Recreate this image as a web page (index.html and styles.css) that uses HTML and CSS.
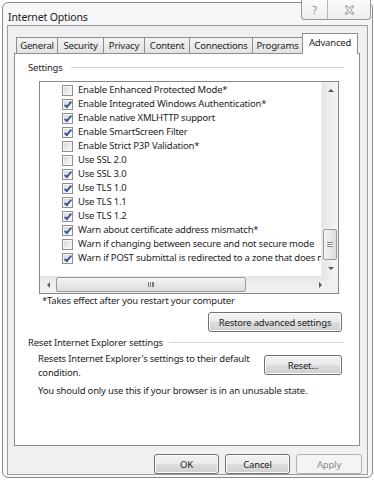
FILE: index.html
```html
<!DOCTYPE html>
<html lang="en">
<head>
  <meta charset="UTF-8" />
  <title>Internet Options</title>
  <link rel="stylesheet" href="styles.css">
</head>
<body>
  <div class="window">
    <div class="titlebar">
      <span class="title">Internet Options</span>
      <div class="caption-buttons">
        <span class="cap-btn cap-help">?</span>
        <span class="cap-btn cap-close">
          <svg width="11" height="10" viewBox="0 0 11 10">
            <path d="M1 1 H3.5 L5.5 3.5 L7.5 1 H10 L6.8 5 L10 9 H7.5 L5.5 6.5 L3.5 9 H1 L4.2 5 Z" fill="none" stroke="#8c8c8c" stroke-width="0.9"/>
          </svg>
        </span>
      </div>
    </div>

    <div class="dialog">
      <div class="tabs">
        <span class="tab tab-general">General</span>
        <span class="tab tab-security">Security</span>
        <span class="tab tab-privacy">Privacy</span>
        <span class="tab tab-content">Content</span>
        <span class="tab tab-connections">Connections</span>
        <span class="tab tab-programs">Programs</span>
        <span class="tab tab-advanced active">Advanced</span>
      </div>

      <div class="panel">
        <div class="group-head">
          <span>Settings</span>
          <span class="rule"></span>
        </div>

        <div class="listbox">
          <div class="list-main">
            <ul class="list-items">
              <li><span class="check"></span>Enable Enhanced Protected Mode*</li>
              <li><span class="check on"></span>Enable Integrated Windows Authentication*</li>
              <li><span class="check on"></span>Enable native XMLHTTP support</li>
              <li><span class="check on"></span>Enable SmartScreen Filter</li>
              <li><span class="check"></span>Enable Strict P3P Validation*</li>
              <li><span class="check"></span>Use SSL 2.0</li>
              <li><span class="check on"></span>Use SSL 3.0</li>
              <li><span class="check on"></span>Use TLS 1.0</li>
              <li><span class="check on"></span>Use TLS 1.1</li>
              <li><span class="check on"></span>Use TLS 1.2</li>
              <li><span class="check on"></span>Warn about certificate address mismatch*</li>
              <li><span class="check"></span>Warn if changing between secure and not secure mode</li>
              <li><span class="check on"></span>Warn if POST submittal is redirected to a zone that does not permit posts</li>
            </ul>
            <div class="vscroll">
              <span class="arrow arrow-up"></span>
              <span class="vtrack">
                <span class="vthumb"><span class="grip-h"></span></span>
              </span>
              <span class="arrow arrow-down"></span>
            </div>
          </div>
          <div class="hscroll-row">
            <div class="hscroll">
              <span class="arrow arrow-left"></span>
              <span class="htrack">
                <span class="hthumb"><span class="grip-v"></span></span>
              </span>
              <span class="arrow arrow-right"></span>
            </div>
            <div class="corner"></div>
          </div>
        </div>

        <p class="note">*Takes effect after you restart your computer</p>

        <div class="btn-row">
          <button class="btn btn-restore">Restore advanced settings</button>
        </div>

        <div class="group-head reset-head">
          <span>Reset Internet Explorer settings</span>
          <span class="rule"></span>
        </div>

        <div class="reset-row">
          <p class="reset-text">Resets Internet Explorer's settings to their default condition.</p>
          <button class="btn btn-reset">Reset...</button>
        </div>

        <p class="warn">You should only use this if your browser is in an unusable state.</p>
      </div>

      <div class="footer">
        <button class="btn btn-footer">OK</button>
        <button class="btn btn-footer">Cancel</button>
        <button class="btn btn-footer btn-apply" disabled>Apply</button>
      </div>
    </div>
  </div>
</body>
</html>
```

FILE: styles.css
```css
body {
  margin: 0;
  background-color: #ffffff;
  font-family: "Noto Sans", "Open Sans", sans-serif;
  font-size: 9.5px;
  letter-spacing: -0.2px;
  color: #1e1e1e;
}

.window {
  margin: 2px 0 0 2px;
  width: 371px;
  height: 476px;
  box-sizing: border-box;
  border: 1px solid #8a8a8a;
  border-radius: 6px;
  background-color: #f5f6f7;
  display: flex;
  flex-direction: column;
}

/* title bar */
.titlebar {
  height: 24px;
  display: flex;
  align-items: flex-start;
  padding-left: 5px;
  padding-right: 1px;
}

.title {
  font-size: 10.5px;
  letter-spacing: -0.15px;
  line-height: 16px;
  margin-top: 6px;
  color: #1a1a1a;
}

.caption-buttons {
  margin-left: auto;
  margin-top: -3px;
  display: flex;
  height: 20px;
  border: 1px solid #9a9a9a;
  border-top: none;
  border-radius: 0 0 4px 4px;
  background: linear-gradient(#fbfbfb, #eeeeee);
  box-sizing: border-box;
}

.cap-btn {
  display: flex;
  align-items: center;
  justify-content: center;
  color: #8c8c8c;
}

.cap-help {
  width: 25px;
  border-right: 1px solid #b4b4b4;
  font-size: 11px;
}

.cap-close {
  width: 42px;
}

/* dialog body */
.dialog {
  margin: 0 4px 4px;
  flex: 1;
  border: 1px solid #9c9c9c;
  background-color: #f0f0f0;
  padding: 7px 7px 0 6px;
  display: flex;
  flex-direction: column;
}

.tabs {
  display: flex;
  align-items: flex-end;
  height: 20px;
  padding-left: 2px;
}

.tab {
  height: 16px;
  box-sizing: border-box;
  border: 1px solid #8c8e94;
  border-bottom: none;
  margin-left: -1px;
  background: linear-gradient(#f3f3f3, #e3e3e3);
  display: flex;
  align-items: center;
  justify-content: center;
  line-height: 14px;
}

.tab:first-child {
  margin-left: 0;
}

.tab-general { width: 42px; }
.tab-security { width: 47px; }
.tab-privacy { width: 42px; }
.tab-content { width: 46px; }
.tab-connections { width: 64px; }
.tab-programs { width: 51px; }

.tab.active {
  width: 56px;
  height: 21px;
  margin-bottom: -1px;
  background: #ffffff;
  position: relative;
  z-index: 1;
  padding-bottom: 3px;
}

.panel {
  height: 384px;
  border: 1px solid #8c8e94;
  background-color: #ffffff;
  padding: 7px 15px 0 13px;
}

.group-head {
  display: flex;
  align-items: center;
  gap: 8px;
  line-height: 14px;
}

.rule {
  flex: 1;
  height: 0;
  border-top: 1px solid #d0d5d9;
  border-bottom: 1px solid #ffffff;
}

/* settings list */
.listbox {
  margin: 6px 5px 0 11px;
  height: 213px;
  box-sizing: border-box;
  border: 1px solid #828790;
  display: flex;
  flex-direction: column;
  overflow: hidden;
}

.list-main {
  display: flex;
  height: 194px;
}

.list-items {
  list-style: none;
  margin: 0;
  padding: 1px 0 0 22px;
  flex: 1;
  overflow: hidden;
  white-space: nowrap;
}

.list-items li {
  height: 14px;
  line-height: 14px;
  display: flex;
  align-items: center;
}

.check {
  width: 11px;
  height: 11px;
  box-sizing: border-box;
  border: 1px solid #8e8f8f;
  background: linear-gradient(135deg, #d6d6d6, #fbfbfb);
  box-shadow: inset 0 0 0 1px #f6f6f6;
  margin-right: 5px;
  flex-shrink: 0;
  position: relative;
}

.check.on::after {
  content: "";
  position: absolute;
  left: 3px;
  top: 0px;
  width: 2px;
  height: 6px;
  border: solid #3d5a9a;
  border-width: 0 2px 2px 0;
  transform: rotate(40deg);
}

.vscroll {
  width: 17px;
  display: flex;
  flex-direction: column;
  background: linear-gradient(90deg, #e6e6e6, #f5f5f5);
  border-left: 1px solid #ececec;
  box-sizing: border-box;
}

.arrow {
  width: 17px;
  height: 16px;
  display: flex;
  align-items: center;
  justify-content: center;
  flex-shrink: 0;
}

.arrow::before {
  content: "";
  width: 0;
  height: 0;
  border: 3px solid transparent;
}

.arrow-up::before { border-bottom: 3px solid #5a5a5a; border-top: none; }
.arrow-down::before { border-top: 3px solid #5a5a5a; border-bottom: none; }
.arrow-left::before { border-right: 3px solid #5a5a5a; border-left: none; }
.arrow-right::before { border-left: 3px solid #5a5a5a; border-right: none; }

.vtrack {
  flex: 1;
  display: flex;
  flex-direction: column;
  justify-content: flex-end;
  padding: 0 1px;
}

.vthumb {
  height: 29px;
  border: 1px solid #9a9a9a;
  border-radius: 2px;
  background: linear-gradient(90deg, #f4f4f4, #dcdcdc);
  display: flex;
  align-items: center;
  justify-content: center;
}

.grip-h {
  width: 6px;
  height: 5px;
  border-top: 1px solid #8a8a8a;
  border-bottom: 1px solid #8a8a8a;
  background: linear-gradient(#ffffff 0 1px, #8a8a8a 1px 2px, #ffffff 2px 3px, #8a8a8a 3px 4px, transparent 4px);
  box-sizing: border-box;
}

.hscroll-row {
  display: flex;
  height: 17px;
}

.hscroll {
  flex: 1;
  display: flex;
  align-items: center;
  background: linear-gradient(#e6e6e6, #f5f5f5);
}

.hscroll .arrow {
  width: 16px;
}

.htrack {
  flex: 1;
  display: flex;
  height: 15px;
  padding-right: 66px;
}

.hthumb {
  width: 190px;
  border: 1px solid #9a9a9a;
  border-radius: 2px;
  background: linear-gradient(#f4f4f4, #dcdcdc);
  display: flex;
  align-items: center;
  justify-content: center;
  box-sizing: border-box;
}

.grip-v {
  width: 6px;
  height: 5px;
  border-left: 1px solid #7a7a7a;
  border-right: 1px solid #7a7a7a;
  background: linear-gradient(90deg, transparent 0 1px, #7a7a7a 1px 2px, transparent 2px 3px, #7a7a7a 3px 4px, transparent 4px);
  box-sizing: border-box;
}

.corner {
  width: 17px;
  background-color: #f0f0f0;
}

/* text + buttons */
.note {
  margin: 0 0 0 14px;
  line-height: 14px;
}

.btn-row {
  display: flex;
  justify-content: flex-end;
  margin-top: 4px;
  padding-right: 2px;
}

.btn {
  font-family: inherit;
  font-size: 9.5px;
  letter-spacing: -0.2px;
  color: #1e1e1e;
  height: 20px;
  padding: 0;
  border: 1px solid #707070;
  border-radius: 3px;
  background: linear-gradient(#f2f2f2 0%, #ebebeb 50%, #dddddd 51%, #cfcfcf 100%);
  box-shadow: inset 0 0 0 1px #fcfcfc;
}

.btn-restore {
  width: 134px;
}

.reset-head {
  margin-top: 4px;
  gap: 6px;
}

.reset-row {
  display: flex;
  align-items: flex-start;
  justify-content: space-between;
  margin: 2px 2px 0 10px;
}

.reset-text {
  margin: 0;
  width: 222px;
  line-height: 14px;
}

.btn-reset {
  width: 78px;
  margin-top: 3px;
}

.warn {
  margin: 4px 0 0 10px;
  line-height: 14px;
}

.footer {
  display: flex;
  justify-content: flex-end;
  gap: 6px;
  margin-top: 8px;
  margin-right: -2px;
}

.btn-footer {
  width: 65px;
}

.btn-apply {
  width: 66px;
  color: #8a8a8a;
  border-color: #adb2b5;
  background: #f4f4f4;
  box-shadow: none;
}
```
